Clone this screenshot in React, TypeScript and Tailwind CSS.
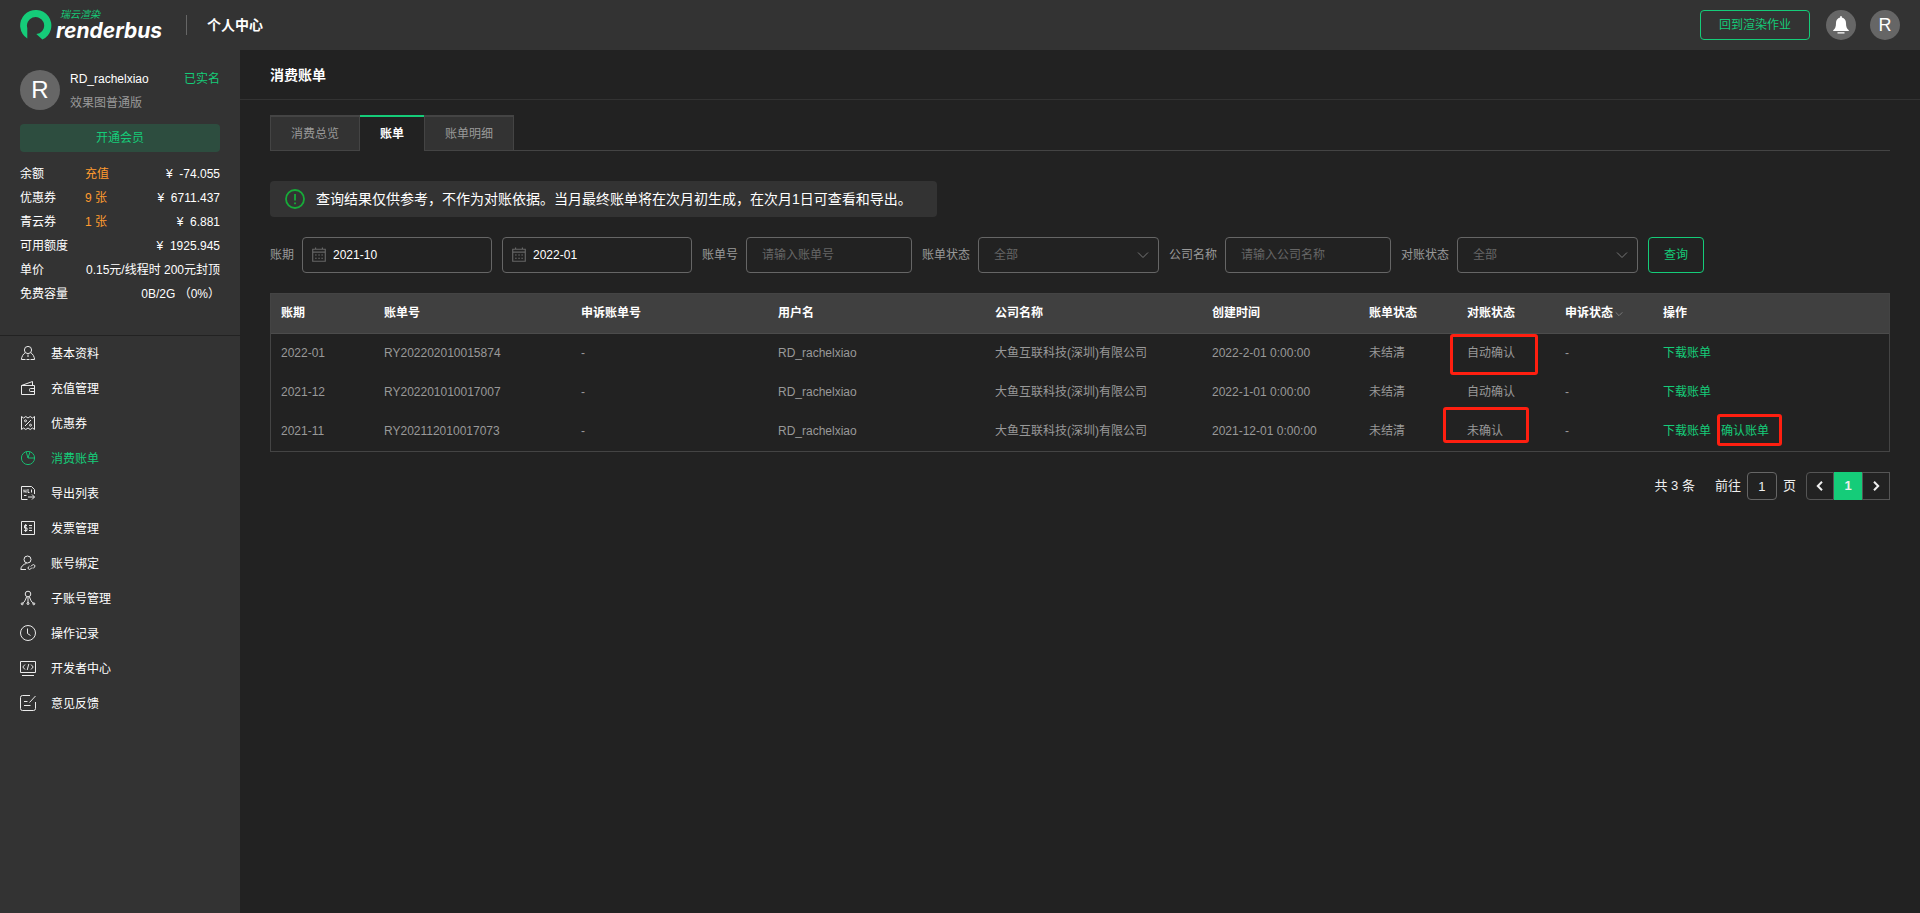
import { useState } from 'react'
import type { ReactNode } from 'react'

type Tab = '消费总览' | '账单' | '账单明细'

const icons: Record<string, ReactNode> = {
  profile: (
    <>
      <circle cx="8" cy="5" r="3.6" />
      <path d="M5.3 7.6C3.2 9 1.6 11.600 1.400 14.500H5.500M10.700 7.600C12.800 9 14.400 11.600 14.600 14.500H10.500M8 9.500V12M6.500 14.500H9.500" />
    </>
  ),
  wallet: (
    <>
      <path d="M1.500 5.500H14.500V14.500H1.500ZM1.500 5.500L12.500 1.500V5.500" />
      <path d="M14.500 8.500H10.500A1 1 0 0 0 9.500 9.500V10.500A1 1 0 0 0 10.500 11.500H14.500" />
    </>
  ),
  coupon: (
    <>
      <path d="M1.500 1.500L3.500 3L5.800 1.500L8 3L10.200 1.500L12.500 3L14.500 1.500V14.500L12.500 13L10.200 14.500L8 13L5.800 14.500L3.500 13L1.500 14.500Z" />
      <path d="M5 11L11 5" />
      <circle cx="5.500" cy="5.800" r="1" />
      <circle cx="10.500" cy="10.200" r="1" />
    </>
  ),
  bill: (
    <>
      <circle cx="8" cy="8" r="6.600" />
      <path d="M6.200 1.800L8 8H14.500M10 1.800L8 8" />
    </>
  ),
  export: (
    <>
      <path d="M7.500 14.500H1.500V1.500H11.500L14.500 4.500V9" />
      <path d="M4 4.500V7.500M4 5.500L6 7.500V4.500M8 4V7.500H9.500M11.500 4.500V7.500M4 10.500H6.500" />
      <path d="M8 12H14.500M12 9.500L14.500 12L12 14.500" />
    </>
  ),
  invoice: (
    <>
      <path d="M1.500 1.500H14.500V14.500H1.500Z" />
      <path d="M7 5.500H4.500V8H7V10.500H4.200M5.700 4V12M9 5.500H12M9 8H12M9 10.500H12" />
    </>
  ),
  bind: (
    <>
      <circle cx="7.500" cy="4.500" r="3.500" />
      <path d="M6.500 8.500C3.500 9 .8 11.500.8 14.500H6" />
      <path d="M10.800 11.500L12.300 10C13.700 8.800 15.800 10.500 14.600 12L13 13.600M12 12.500L10.600 14C9.200 15.300 7.200 13.500 8.400 12L9.500 11" />
    </>
  ),
  children: (
    <>
      <circle cx="8" cy="4" r="2.800" />
      <path d="M6.500 7C5.500 10 4.500 12 2.500 13.500M9.500 7C10.500 10 11.500 12 13.500 13.500M8 7V13.500" />
      <circle cx="2.200" cy="13.800" r="1" />
      <circle cx="8" cy="13.500" r="1" />
      <circle cx="13.800" cy="13.800" r="1" />
    </>
  ),
  history: (
    <>
      <circle cx="8" cy="8" r="7.500" />
      <path d="M7.500 3.500V8.500L10.500 10.500" />
    </>
  ),
  developer: (
    <>
      <path d="M.5 1.500H15.500V12.500H.5ZM2 15.500H14" />
      <path d="M5 4.500L2.800 7L5 9.500M11 4.500L13.200 7L11 9.500M8.800 4L7.200 10" />
    </>
  ),
  feedback: (
    <>
      <path d="M10 .5H2.500A2 2 0 0 0 .5 2.500V13.500A2 2 0 0 0 2.500 15.500H13.500A2 2 0 0 0 15.500 13.500V7" />
      <path d="M15.500 1L9.500 7.500M4 6.500H7.500M4 10.500H10.500" />
    </>
  ),
}

const menu = [
  { icon: 'profile', label: '基本资料' },
  { icon: 'wallet', label: '充值管理' },
  { icon: 'coupon', label: '优惠券' },
  { icon: 'bill', label: '消费账单' },
  { icon: 'export', label: '导出列表' },
  { icon: 'invoice', label: '发票管理' },
  { icon: 'bind', label: '账号绑定' },
  { icon: 'children', label: '子账号管理' },
  { icon: 'history', label: '操作记录' },
  { icon: 'developer', label: '开发者中心' },
  { icon: 'feedback', label: '意见反馈' },
]

const account = [
  { label: '余额', extra: '充值', value: '¥  -74.055' },
  { label: '优惠券', extra: '9 张', value: '¥  6711.437' },
  { label: '青云券', extra: '1 张', value: '¥  6.881' },
  { label: '可用额度', extra: '', value: '¥  1925.945' },
  { label: '单价', extra: '', value: '0.15元/线程时 200元封顶' },
  { label: '免费容量', extra: '', value: '0B/2G （0%）' },
]

const bills = [
  { period: '2022-01', no: 'RY202202010015874', created: '2022-2-01 0:00:00', check: '自动确认', mark: 'auto' },
  { period: '2021-12', no: 'RY202201010017007', created: '2022-1-01 0:00:00', check: '自动确认', mark: '' },
  { period: '2021-11', no: 'RY202112010017073', created: '2021-12-01 0:00:00', check: '未确认', mark: 'pending' },
]

const columns = [
  { title: '账期', width: 'w-[103px]' },
  { title: '账单号', width: 'w-[197px]' },
  { title: '申诉账单号', width: 'w-[197px]' },
  { title: '用户名', width: 'w-[217px]' },
  { title: '公司名称', width: 'w-[217px]' },
  { title: '创建时间', width: 'w-[157px]' },
  { title: '账单状态', width: 'w-[98px]' },
  { title: '对账状态', width: 'w-[98px]' },
  { title: '申诉状态', width: 'w-[98px]' },
  { title: '操作', width: '' },
]

function Chevron({ className }: { className: string }) {
  return (
    <svg viewBox="0 0 12 12" fill="none" stroke="currentColor" className={className}>
      <path d="M1 3.500L6 8.500L11 3.500" />
    </svg>
  )
}

function Logo() {
  return (
    <a href="#" className="flex items-center gap-1">
      <svg viewBox="0 0 32 32" className="w-8 h-8">
        <path
          d="M7.300 29.600A15.600 15.600 0 1 1 22.400 30.600L16.300 25L19.500 24.200A8.600 8.600 0 1 0 7.300 19Z"
          fill="#15cc79"
        />
      </svg>
      <span className="flex flex-col italic">
        <span className="pl-1 text-[10px] leading-3 text-[#15cc79]">瑞云渲染</span>
        <span className="font-['Inter'] text-[21px] leading-5 font-bold text-white">renderbus</span>
      </span>
    </a>
  )
}

function DateField({ id, label, value }: { id: string; label: string; value: string }) {
  return (
    <div className="flex items-center gap-1.5 w-[190px] h-9 px-2 border border-[#666] rounded">
      <svg viewBox="0 0 14 14" fill="none" stroke="#666" className="w-4 h-4">
        <path d="M1.500 2H12.500V12.500H1.500ZM1.500 4.500H12.500M4 .5V2M10 .5V2M3.500 7H5M6.300 7H7.800M9 7H10.500M3.500 9.800H5M6.300 9.800H7.800M9 9.800H10.500" />
      </svg>
      <input id={id} aria-label={label} defaultValue={value} className="flex-1 min-w-0 text-white outline-none" />
    </div>
  )
}

function TextField({ id, label, placeholder }: { id: string; label: string; placeholder: string }) {
  return (
    <div className="flex items-center gap-2">
      <label htmlFor={id}>{label}</label>
      <input
        id={id}
        placeholder={placeholder}
        className="w-[166px] h-9 px-[15px] border border-[#666] rounded outline-none placeholder:text-[#666]"
      />
    </div>
  )
}

function SelectField({ id, label }: { id: string; label: string }) {
  return (
    <div className="flex items-center gap-2">
      <label htmlFor={id}>{label}</label>
      <div className="relative">
        <select
          id={id}
          className="block appearance-none w-[181px] h-9 px-[15px] border border-[#666] rounded text-[#666] outline-none"
        >
          <option>全部</option>
        </select>
        <Chevron className="absolute right-2.5 top-3 w-3 h-3 text-[#777] pointer-events-none" />
      </div>
    </div>
  )
}

export default function App() {
  const [activeTab, setActiveTab] = useState<Tab>('账单')

  return (
    <div className="min-h-screen flex flex-col bg-[#222] text-white text-xs font-['Liberation_Sans','Noto_Sans_CJK_SC',sans-serif]">
      {/* HEADER */}
      <header className="flex items-center h-[50px] px-5 bg-[#333]">
        <Logo />
        <div className="w-px h-5 ml-6 mr-5 bg-[#666]" />
        <h1 className="text-sm font-bold">个人中心</h1>
        <div className="flex items-center ml-auto">
          <button className="w-[110px] h-[30px] mr-4 border border-[#15cc79] rounded text-[#15cc79]">回到渲染作业</button>
          <button aria-label="notifications" className="flex items-center justify-center w-[30px] h-[30px] mr-3.5 rounded-full bg-[#666]">
            <svg viewBox="0 0 18 18" fill="white" className="w-[18px] h-[18px]">
              <path d="M9 0C9.700 0 9.900.6 9.900 1.500C12.500 2 14 4.200 14 7C14 11 14.800 12.800 16.800 14.300V15H1.200V14.300C3.200 12.800 4 11 4 7C4 4.200 5.500 2 8.100 1.500C8.100.6 8.300 0 9 0ZM5.500 16.300H12.500V17.500H5.500Z" />
            </svg>
          </button>
          <button className="w-[30px] h-[30px] rounded-full bg-[#666] text-lg leading-[30px]">R</button>
        </div>
      </header>

      <div className="flex flex-1">
        {/* SIDEBAR */}
        <aside className="w-60 shrink-0 bg-[#333]">
          <div className="px-5 pt-5 pb-[29px] border-b border-[#222]">
            <div className="flex gap-2.5">
              <div className="w-10 h-10 rounded-full bg-[#666] text-2xl leading-10 text-center">R</div>
              <div className="flex-1">
                <div className="flex justify-between leading-[18px]">
                  <span>RD_rachelxiao</span>
                  <span className="text-[#15cc79]">已实名</span>
                </div>
                <p className="mt-1.5 leading-[18px] text-[#999]">效果图普通版</p>
              </div>
            </div>
            <button className="w-full h-7 mt-3 rounded bg-[#2d4d3f] text-[#15cc79]">开通会员</button>
            <dl className="mt-2.5 leading-6">
              {account.map(item => (
                <div key={item.label} className="flex whitespace-pre">
                  <dt>{item.label}</dt>
                  {item.extra && (
                    <dd className={item.label === '余额' ? 'ml-[41px] text-[#ff9b2f]' : 'ml-[29px] text-[#ff9b2f]'}>{item.extra}</dd>
                  )}
                  <dd className="ml-auto">{item.value}</dd>
                </div>
              ))}
            </dl>
          </div>
          <nav>
            {menu.map(item => (
              <a
                key={item.label}
                href="#"
                className={`flex items-center gap-[15px] h-[35px] px-5 ${item.icon === 'bill' ? 'text-[#15cc79]' : ''}`}
              >
                <svg viewBox="0 0 16 16" fill="none" stroke="currentColor" className="w-4 h-4 mb-0.5 opacity-90 overflow-visible">
                  {icons[item.icon]}
                </svg>
                {item.label}
              </a>
            ))}
          </nav>
        </aside>

        {/* CONTENT */}
        <main className="flex-1 min-w-0">
          <h2 className="h-[50px] px-[30px] border-b border-[#333] text-sm leading-[50px] font-bold">消费账单</h2>

          <div className="px-[30px] pt-[15px]">
            {/* TABS */}
            <div className="flex">
              {(['消费总览', '账单', '账单明细'] as Tab[]).map(tab => (
                <button
                  key={tab}
                  onClick={() => setActiveTab(tab)}
                  className={`h-9 px-5 border-t-2 ${
                    activeTab === tab
                      ? 'border-t-[#15cc79] text-white font-bold'
                      : 'border-x border-b border-[#444] bg-[#333] text-[#999]'
                  }`}
                >
                  {tab}
                </button>
              ))}
              <div className="flex-1 border-b border-[#444]" />
            </div>

            {/* NOTICE */}
            <div className="flex items-center gap-[11px] w-[667px] max-w-full h-9 mt-[30px] px-[15px] rounded bg-[#333] text-sm">
              <svg viewBox="0 0 20 20" fill="none" stroke="#17ab39" strokeWidth="1.800" className="w-5 h-5">
                <circle cx="10" cy="10" r="9" />
                <path d="M10 5V11.500M10 13.500V15.200" />
              </svg>
              <p>查询结果仅供参考，不作为对账依据。当月最终账单将在次月初生成，在次月1日可查看和导出。</p>
            </div>

            {/* FILTERS */}
            <form className="flex flex-wrap gap-2.5 mt-5 text-[#999]">
              <div className="flex items-center gap-2">
                <label htmlFor="from">账期</label>
                <DateField id="from" label="账期" value="2021-10" />
              </div>
              <DateField id="to" label="账期" value="2022-01" />
              <TextField id="billNo" label="账单号" placeholder="请输入账单号" />
              <SelectField id="billStatus" label="账单状态" />
              <TextField id="company" label="公司名称" placeholder="请输入公司名称" />
              <SelectField id="checkStatus" label="对账状态" />
              <button type="button" className="w-14 h-9 border border-[#15cc79] rounded text-[#15cc79]">查询</button>
            </form>

            {/* TABLE */}
            <div className="mt-5 pb-px border border-[#444]">
              <table className="w-full table-fixed text-left">
                <thead>
                  <tr className="h-[39px] bg-[#404040] border-b border-[#4c4c4c]">
                    {columns.map(col => (
                      <th key={col.title} className={`px-2.5 font-bold whitespace-nowrap ${col.width}`}>
                        {col.title}
                        {col.title === '申诉状态' && <Chevron className="inline ml-0.5 w-2 h-2 text-[#999]" />}
                      </th>
                    ))}
                  </tr>
                </thead>
                <tbody className="text-[#999]">
                  {bills.map(bill => (
                    <tr key={bill.no} className="h-[39px]">
                      <td className="px-2.5">{bill.period}</td>
                      <td className="px-2.5">{bill.no}</td>
                      <td className="px-2.5">-</td>
                      <td className="px-2.5">RD_rachelxiao</td>
                      <td className="px-2.5">大鱼互联科技(深圳)有限公司</td>
                      <td className="px-2.5">{bill.created}</td>
                      <td className="px-2.5">未结清</td>
                      <td className="relative px-2.5">
                        {bill.check}
                        {bill.mark === 'auto' && (
                          <div className="absolute -left-[7px] top-0 w-[88px] h-[41px] border-3 border-[#ff1f10] rounded-[3px]" />
                        )}
                        {bill.mark === 'pending' && (
                          <div className="absolute -left-3.5 -top-1 w-[86px] h-9 border-3 border-[#ff1f10] rounded-[3px]" />
                        )}
                      </td>
                      <td className="px-2.5">-</td>
                      <td className="relative px-2.5 text-[#15cc79]">
                        <div className="flex gap-2.5">
                          <a href="#">下载账单</a>
                          {bill.mark === 'pending' && <a href="#">确认账单</a>}
                        </div>
                        {bill.mark === 'pending' && (
                          <div className="absolute left-16 top-[3px] w-[65px] h-8 border-3 border-[#ff1f10] rounded-[3px]" />
                        )}
                      </td>
                    </tr>
                  ))}
                </tbody>
              </table>
            </div>

            {/* PAGINATION */}
            <div className="flex items-center justify-end h-7 mt-5 text-[13px] text-[#eee]">
              <span className="mr-5">共 3 条</span>
              <label htmlFor="page">前往</label>
              <input id="page" defaultValue="1" className="w-[30px] h-7 mx-1.5 border border-[#666] rounded text-center outline-none" />
              <span className="mr-2.5">页</span>
              <button aria-label="previous" className="flex items-center justify-center w-7 h-7 border border-[#555] rounded-l-sm">
                <svg viewBox="0 0 10 10" fill="none" stroke="currentColor" strokeWidth="2" className="w-2.5 h-2.5">
                  <path d="M7 .8L2.800 5L7 9.200" />
                </svg>
              </button>
              <button className="w-7 h-7 bg-[#15cc79] font-bold">1</button>
              <button aria-label="next" className="flex items-center justify-center w-7 h-7 border border-[#555]">
                <svg viewBox="0 0 10 10" fill="none" stroke="currentColor" strokeWidth="2" className="w-2.5 h-2.5">
                  <path d="M3 .8L7.200 5L3 9.200" />
                </svg>
              </button>
            </div>
          </div>
        </main>
      </div>
    </div>
  )
}
